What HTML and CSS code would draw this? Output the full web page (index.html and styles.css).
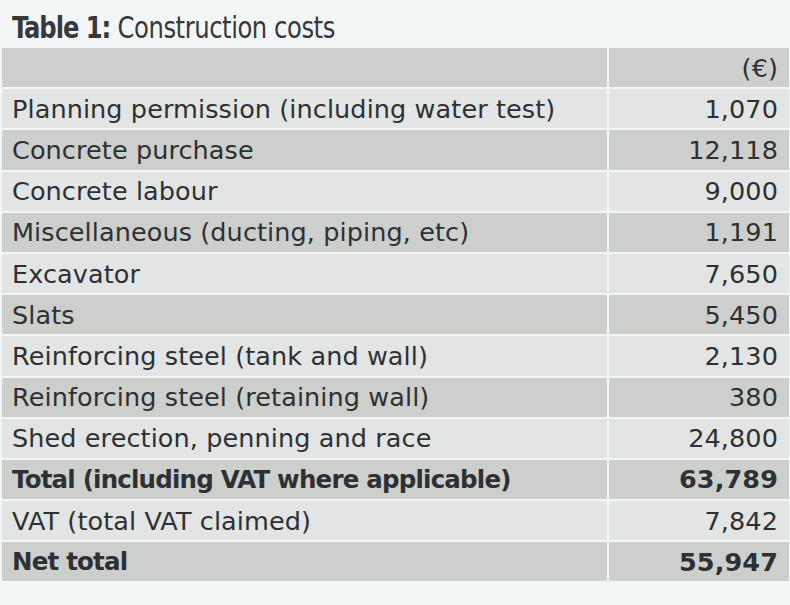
FILE: index.html
```html
<!DOCTYPE html>
<html>
<head>
<meta charset="utf-8">
<link rel="stylesheet" href="styles.css">
</head>
<body>
<h1 class="title"><span class="title-text"><span class="title-bold">Table 1:</span> Construction costs</span></h1>
<div class="grid">
  <div class="cell dark"></div><div class="cell dark num">(€)</div>
  <div class="cell light">Planning permission (including water test)</div><div class="cell light num">1,070</div>
  <div class="cell dark">Concrete purchase</div><div class="cell dark num">12,118</div>
  <div class="cell light">Concrete labour</div><div class="cell light num">9,000</div>
  <div class="cell dark">Miscellaneous (ducting, piping, etc)</div><div class="cell dark num">1,191</div>
  <div class="cell light">Excavator</div><div class="cell light num">7,650</div>
  <div class="cell dark">Slats</div><div class="cell dark num">5,450</div>
  <div class="cell light">Reinforcing steel (tank and wall)</div><div class="cell light num">2,130</div>
  <div class="cell dark">Reinforcing steel (retaining wall)</div><div class="cell dark num">380</div>
  <div class="cell light">Shed erection, penning and race</div><div class="cell light num">24,800</div>
  <div class="cell dark bold label-bold">Total (including VAT where applicable)</div><div class="cell dark num bold">63,789</div>
  <div class="cell light">VAT (total VAT claimed)</div><div class="cell light num">7,842</div>
  <div class="cell dark bold label-bold">Net total</div><div class="cell dark num bold">55,947</div>
</div>
</body>
</html>
```
FILE: styles.css
```css
html, body {
  margin: 0;
  padding: 0;
  background: #f3f6f7;
}
body {
  width: 790px;
  height: 605px;
  overflow: hidden;
}
.title {
  margin: 0;
  padding: 9px 0 0 12px;
  height: 39px;
  font-family: "DejaVu Sans", sans-serif;
  font-stretch: condensed;
  font-weight: normal;
  font-size: 31px;
  line-height: 36px;
  color: #35393b;
  letter-spacing: -0.5px;
  white-space: nowrap;
}
.title-text {
  display: inline-block;
  transform: scaleX(0.87);
  transform-origin: left center;
}
.title-bold {
  font-weight: bold;
  letter-spacing: -1.2px;
}
.grid {
  margin-left: 2px;
  width: 787px;
  display: grid;
  grid-template-columns: 605px 180px;
  grid-auto-rows: 39.2px;
  gap: 2px 2px;
  background: #f3f6f7;
}
.cell {
  display: flex;
  align-items: center;
  padding: 0 10px;
  font-family: "DejaVu Sans", sans-serif;
  font-size: 25.5px;
  letter-spacing: 0.1px;
  color: #2d3133;
  white-space: nowrap;
}
.num {
  justify-content: flex-end;
  padding-right: 11px;
}
.dark {
  background: #cdcfcc;
}
.light {
  background: #e2e5e4;
}
.bold {
  font-weight: bold;
}
.label-bold {
  font-size: 24.5px;
  letter-spacing: -0.8px;
}
```
